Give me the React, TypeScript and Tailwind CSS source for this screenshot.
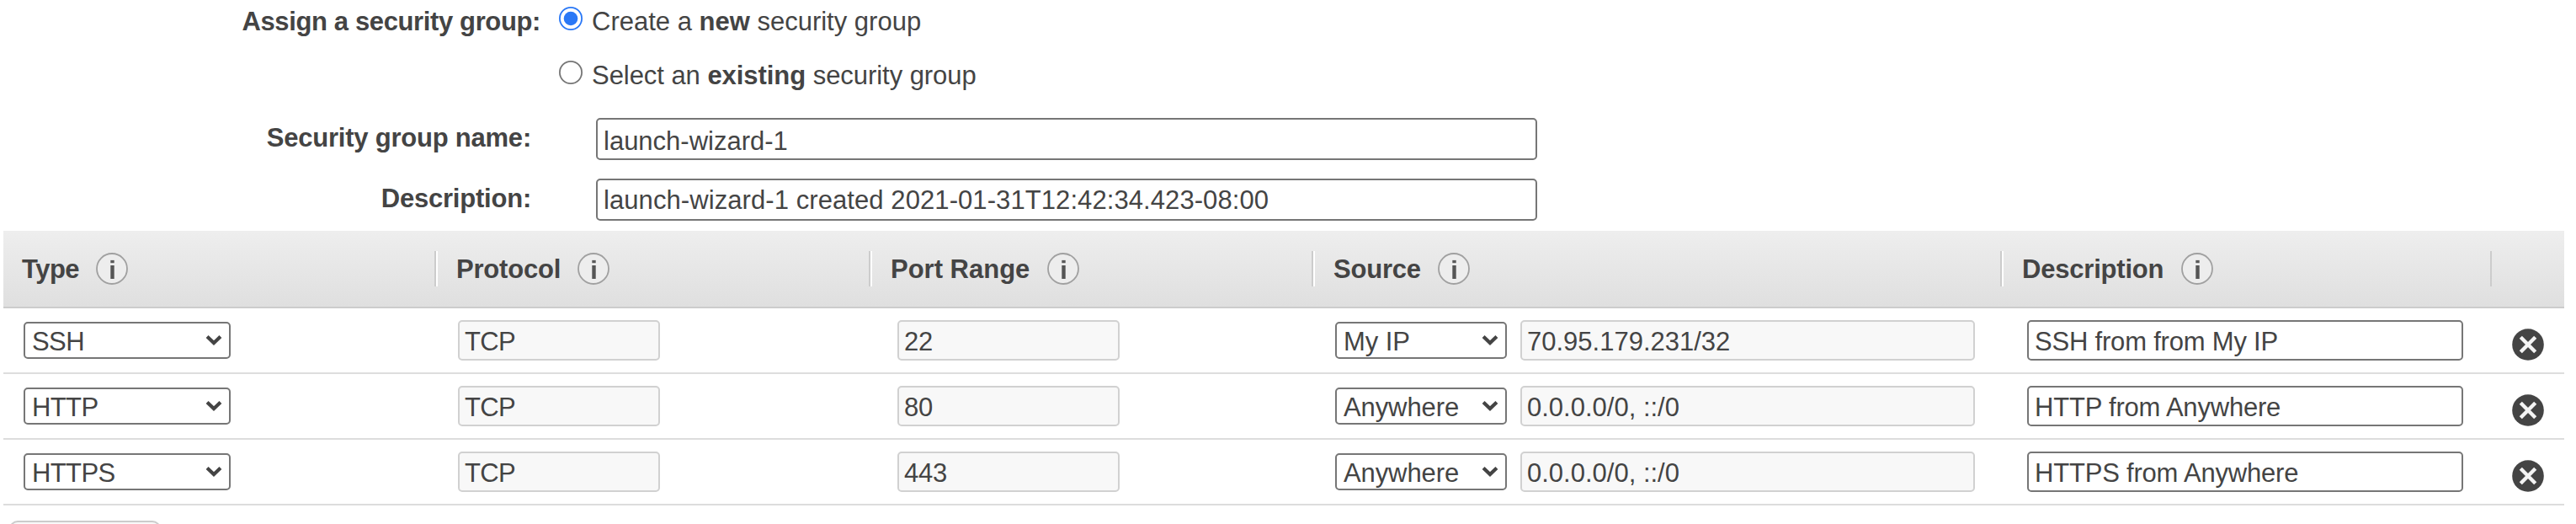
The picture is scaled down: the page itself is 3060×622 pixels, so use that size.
import React from "react";

type Rule = {
  type: string;
  port: string;
  source: string;
  cidr: string;
  description: string;
};

const rules: Rule[] = [
  { type: "SSH", port: "22", source: "My IP", cidr: "70.95.179.231/32", description: "SSH from from My IP" },
  { type: "HTTP", port: "80", source: "Anywhere", cidr: "0.0.0.0/0, ::/0", description: "HTTP from Anywhere" },
  { type: "HTTPS", port: "443", source: "Anywhere", cidr: "0.0.0.0/0, ::/0", description: "HTTPS from Anywhere" },
];

const columns = [
  { label: "Type", cell: "w-[514px] pl-[22px]", text: "w-[88px] tracking-[-0.5px]" },
  { label: "Protocol", cell: "w-[516px]", text: "w-[144px] tracking-[-0.2px]" },
  { label: "Port Range", cell: "w-[526px]", text: "w-[186px]" },
  { label: "Source", cell: "w-[818px]", text: "w-[124px] tracking-[-0.2px]" },
  { label: "Description", cell: "w-[582px]", text: "w-[189px] tracking-[-0.2px]" },
];

const grid = "grid grid-cols-[516px_516px_526px_818px_580px_1fr]";

function InfoIcon() {
  return (
    <svg className="size-[38px] shrink-0" viewBox="0 0 38 38" fill="none">
      <circle cx="19" cy="19" r="18" fill="#ededed" stroke="#a0a0a0" strokeWidth="1.8" />
      <rect x="17.3" y="8.9" width="4.4" height="3.3" fill="#5a5a5a" />
      <rect x="17.3" y="15" width="4.4" height="16" fill="#555" />
    </svg>
  );
}

function DeleteIcon() {
  return (
    <svg className="size-[38px]" viewBox="0 0 38 38" fill="none">
      <circle cx="19" cy="19" r="18.8" fill="#444" />
      <path d="M10.3 10.3 L27.7 27.7 M27.7 10.3 L10.3 27.7" stroke="#f4f4f4" strokeWidth="4.4" />
    </svg>
  );
}

function Select({ value, className }: { value: string; className: string }) {
  return (
    <div className={`flex h-[44px] items-center justify-between rounded-[5px] border-2 border-[#767676] bg-white px-[8px] ${className}`}>
      <span className="pt-[4px] leading-[36px]">{value}</span>
      <svg className="h-[14px] w-[20px]" viewBox="0 0 20 14" fill="none">
        <path d="M2.1 2.4 L10 10.1 L17.9 2.4" stroke="#444" strokeWidth="4.2" />
      </svg>
    </div>
  );
}

function Field({ value, disabled, className }: { value: string; disabled?: boolean; className: string }) {
  return (
    <input
      readOnly
      value={value}
      className={`block rounded-[5px] border-2 pr-[6px] outline-none ${disabled ? "border-[#d1d1d1] bg-[#f8f8f8]" : "border-[#767676] bg-white"} ${className}`}
    />
  );
}

function Radio({ checked }: { checked?: boolean }) {
  return (
    <svg className="size-[28px] shrink-0" viewBox="0 0 28 28" fill="none">
      <circle cx="14" cy="14" r="13.1" stroke={checked ? "#2a78f6" : "#767676"} strokeWidth="1.8" fill="#fff" />
      {checked && <circle cx="14" cy="14" r="8.3" fill="#2a78f6" />}
    </svg>
  );
}

export default function App() {
  return (
    <div className="h-[622px] w-[3060px] overflow-hidden bg-white font-['Liberation_Sans',Arial,sans-serif] text-[31px] leading-[40px] text-[#444]">
      <div className="flex h-[274px] flex-col">
        <div className="flex h-[64px] items-start pt-[6px]">
          <div className="w-[642px] text-right font-bold tracking-[-0.37px]">Assign a security group:</div>
          <div className="ml-[22px] flex pt-[2px]">
            <Radio checked />
          </div>
          <div className="ml-[11px] whitespace-nowrap">
            Create a <b>new</b> security group
          </div>
        </div>
        <div className="flex h-[76px] items-start pt-[6px]">
          <div className="ml-[664px] flex pt-[2px]">
            <Radio />
          </div>
          <div className="ml-[11px] whitespace-nowrap tracking-[-0.05px]">
            Select an <b>existing</b> security group
          </div>
        </div>
        <div className="flex h-[72px] items-start">
          <div className="w-[631px] pt-[4px] text-right font-bold tracking-[-0.22px]">Security group name:</div>
          <Field value="launch-wizard-1" className="ml-[77px] h-[50px] w-[1118px] pt-[6px] pl-[7px]" />
        </div>
        <div className="flex items-start">
          <div className="w-[631px] pt-[4px] text-right font-bold tracking-[-0.22px]">Description:</div>
          <Field
            value="launch-wizard-1 created 2021-01-31T12:42:34.423-08:00"
            className="ml-[77px] h-[50px] w-[1118px] pt-[2px] pl-[7px] tracking-[0.08px]"
          />
        </div>
      </div>

      <div className="ml-[4px] w-[3042px]">
        <div className="flex h-[92px] items-center border-b-2 border-[#ccc] bg-linear-to-b from-[#eee] to-[#dfdfdf]">
          {columns.map((c, i) => (
            <div key={c.label} className={`flex h-[42px] items-center border-r-2 border-[#ccc] ${c.cell}`}>
              {i > 0 && <div className="mr-[22px] h-[42px] w-[2px] shrink-0 bg-white" />}
              <span className={`shrink-0 pt-[2px] font-bold whitespace-nowrap ${c.text}`}>{c.label}</span>
              <InfoIcon />
            </div>
          ))}
        </div>

        {rules.map((r) => (
          <div key={r.type} className={`${grid} h-[78px] items-center border-b-2 border-[#ddd]`}>
            <div className="pl-[24px]">
              <Select value={r.type} className="w-[246px] tracking-[-0.6px]" />
            </div>
            <div className="pl-[24px]">
              <Field disabled value="TCP" className="h-[48px] w-[240px] pt-[4px] pl-[6px] tracking-[-0.6px]" />
            </div>
            <div className="pl-[30px]">
              <Field disabled value={r.port} className="h-[48px] w-[264px] pt-[4px] pl-[6px] tracking-[-0.2px]" />
            </div>
            <div className="flex items-center pl-[24px]">
              <Select value={r.source} className="w-[204px] tracking-[-0.1px]" />
              <Field disabled value={r.cidr} className="ml-[16px] h-[48px] w-[540px] pt-[4px] pl-[6px]" />
            </div>
            <div className="pl-[28px]">
              <Field value={r.description} className="h-[48px] w-[518px] pt-[4px] pl-[7px] tracking-[-0.2px]" />
            </div>
            <div className="pt-[10px] pl-[24px]">
              <DeleteIcon />
            </div>
          </div>
        ))}

        <div className="mt-[18px] ml-[7px] h-[52px] w-[180px] rounded-[10px] border-2 border-[#ccc] bg-[#f8f8f8]" />
      </div>
    </div>
  );
}
